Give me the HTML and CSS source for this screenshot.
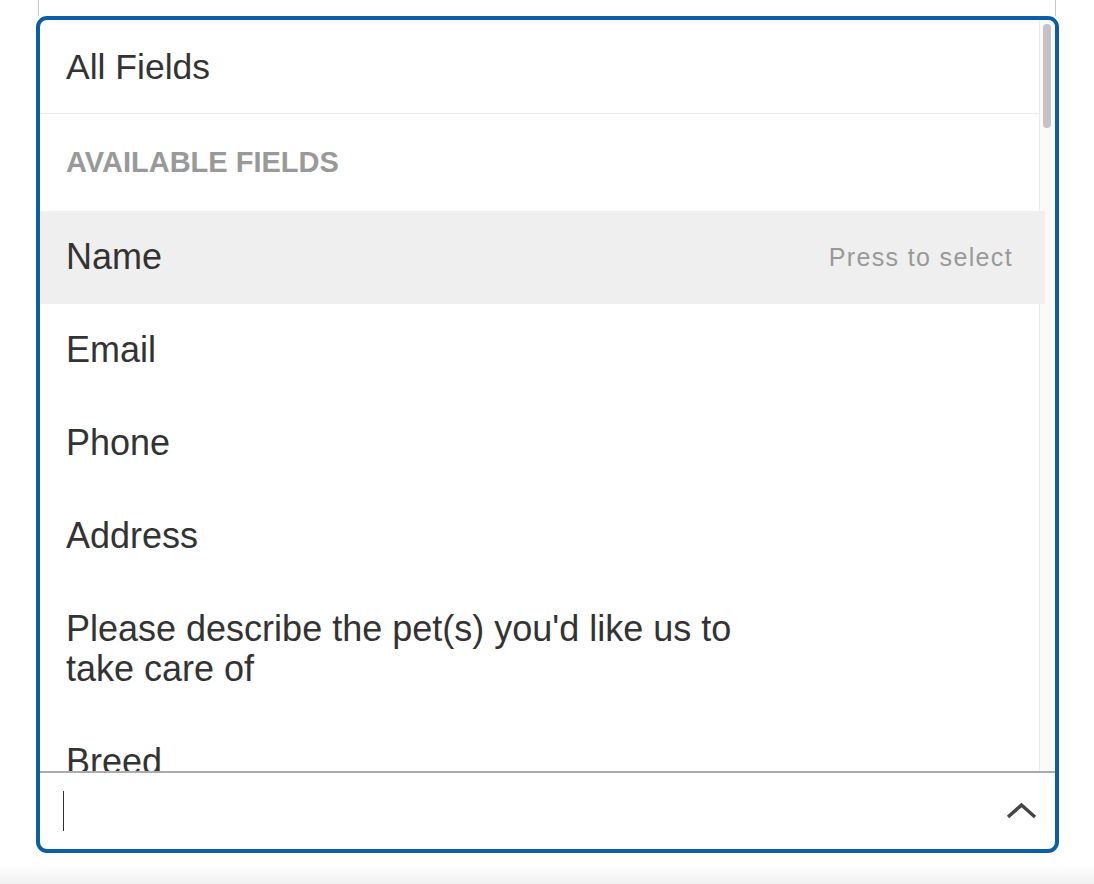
FILE: index.html
```html
<!DOCTYPE html>
<html lang="en">
<head>
<meta charset="utf-8">
<title>Field select</title>
<link rel="stylesheet" href="styles.css">
</head>
<body>
<div class="page">
  <div class="prev-field"></div>
  <div class="combo">
    <div class="list">
      <div class="track"><div class="thumb"></div></div>
      <div class="row row-all">All Fields</div>
      <div class="row row-header">AVAILABLE FIELDS</div>
      <div class="row row-active"><span class="label">Name</span><span class="hint">Press to select</span></div>
      <div class="row"><span class="label">Email</span></div>
      <div class="row"><span class="label">Phone</span></div>
      <div class="row"><span class="label">Address</span></div>
      <div class="row"><span class="label">Please describe the pet(s) you'd like us to take care of</span></div>
      <div class="row"><span class="label">Breed</span></div>
    </div>
    <div class="input">
      <span class="caret"></span>
      <svg class="chevron" width="34" height="20" viewBox="0 0 34 20" aria-hidden="true">
        <polyline points="3,16 16.5,4 30,16" fill="none" stroke="#444" stroke-width="3.4" stroke-linecap="butt" stroke-linejoin="miter"/>
      </svg>
    </div>
  </div>
  <div class="bottom-band"></div>
</div>
</body>
</html>
```

FILE: styles.css
```css
html, body {
  margin: 0;
  padding: 0;
  background: #ffffff;
}

body {
  font-family: "Liberation Sans", Arial, sans-serif;
  color: #333333;
  width: 1094px;
  height: 884px;
  overflow: hidden;
}

.page {
  display: flex;
  flex-direction: column;
  height: 884px;
}

.prev-field {
  margin-left: 38px;
  width: 1016px;
  height: 16px;
  border-left: 1px solid #c9c9c9;
  border-right: 1px solid #c9c9c9;
  flex: none;
}

.combo {
  margin-left: 36px;
  width: 1015px;
  height: 829px;
  border: 4px solid #0b5ea6;
  border-radius: 11px;
  display: flex;
  flex-direction: column;
  overflow: hidden;
  flex: none;
  background: #fff;
}

.list {
  position: relative;
  height: 751px;
  overflow: hidden;
  flex: none;
  border-bottom: 2px solid #ababab;
}

.track {
  position: absolute;
  top: 0;
  right: 0;
  bottom: 0;
  width: 15px;
  background: #fafafa;
  border-left: 1px solid #ebebeb;
}

.thumb {
  position: absolute;
  top: 4px;
  left: 3px;
  width: 8px;
  height: 104px;
  border-radius: 4px;
  background: #c3c3c3;
}

.row {
  position: relative;
  display: flex;
  align-items: center;
  justify-content: space-between;
  margin-right: 10px;
  padding: 26.5px 32px 26.5px 26px;
  font-size: 36px;
  line-height: 40px;
  color: #333333;
}

.row-all {
  font-size: 35.5px;
  margin-right: 16px;
  border-bottom: 1px solid #ececec;
  padding-bottom: 26px;
}

.row-header {
  font-size: 29px;
  font-weight: bold;
  color: #999999;
  padding-top: 28.5px;
  padding-bottom: 28.5px;
}

.row-active {
  background: #efefef;
}

.label {
  max-width: 720px;
}

.hint {
  font-size: 25px;
  letter-spacing: 1.35px;
  color: #999999;
  line-height: 40px;
}

.input {
  flex: 1;
  display: flex;
  align-items: center;
  justify-content: space-between;
  padding: 0 16px 0 23px;
}

.caret {
  display: block;
  width: 1px;
  height: 40px;
  background: #333;
}

.chevron {
  display: block;
}

.bottom-band {
  flex: 1;
  margin-top: 12px;
  background: linear-gradient(#ffffff, #f1f1f1);
}
```
